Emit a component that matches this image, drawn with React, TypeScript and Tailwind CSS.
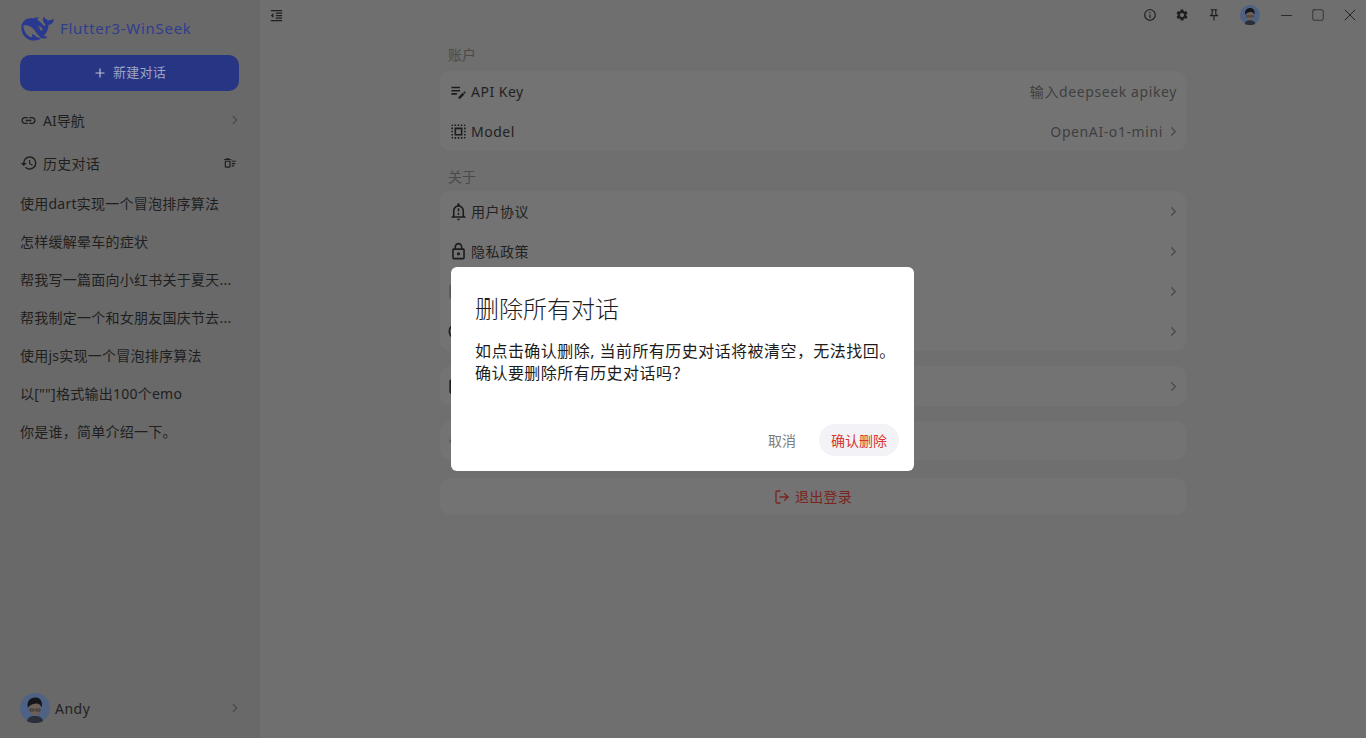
import { ChevronRight, LogOut, Minus, Plus, Square, X } from 'lucide-react';
import {
  MdCheckBoxOutlineBlank,
  MdCircle,
  MdFormatIndentDecrease,
  MdHistory,
  MdInfoOutline,
  MdLink,
  MdOutlineDeleteSweep,
  MdOutlineEditNote,
  MdOutlineLock,
  MdOutlineNotificationImportant,
  MdOutlinePushPin,
  MdRadioButtonUnchecked,
  MdSelectAll,
  MdSettings,
} from 'react-icons/md';

const font = "font-['Noto_Sans','Noto_Sans_CJK_SC',sans-serif]";

const chats = [
  '使用dart实现一个冒泡排序算法',
  '怎样缓解晕车的症状',
  '帮我写一篇面向小红书关于夏天...',
  '帮我制定一个和女朋友国庆节去...',
  '使用js实现一个冒泡排序算法',
  '以[""]格式输出100个emo',
  '你是谁，简单介绍一下。',
];

function Logo() {
  return (
    <svg width="33" height="25" viewBox="0 2.5 24 18.5" fill="#2a3990" className="shrink-0">
      <path d="M23.748 4.482c-.254-.124-.364.113-.512.234-.051.039-.094.09-.137.136-.372.397-.806.657-1.373.626-.829-.046-1.537.214-2.163.848-.133-.782-.575-1.248-1.247-1.548-.352-.156-.708-.311-.955-.65-.172-.241-.219-.51-.305-.774-.055-.16-.11-.323-.293-.35-.2-.031-.278.136-.356.276-.313.572-.434 1.202-.422 1.84.027 1.436.633 2.58 1.838 3.393.137.093.172.187.129.323-.082.28-.18.552-.266.833-.055.179-.137.217-.329.14a5.526 5.526 0 01-1.736-1.18c-.857-.828-1.631-1.742-2.597-2.458a11.365 11.365 0 00-.689-.471c-.985-.957.13-1.743.388-1.836.27-.098.093-.432-.779-.428-.872.004-1.67.295-2.687.684a3.055 3.055 0 01-.465.137 9.597 9.597 0 00-2.883-.102c-1.885.21-3.39 1.102-4.497 2.623C.082 8.606-.231 10.684.152 12.85c.403 2.284 1.569 4.175 3.36 5.653 1.858 1.533 3.997 2.284 6.438 2.14 1.482-.085 3.133-.284 4.994-1.86.47.234.962.327 1.78.397.63.059 1.236-.03 1.705-.128.735-.156.684-.837.419-.961-2.155-1.004-1.682-.595-2.113-.926 1.096-1.296 2.746-2.642 3.392-7.003.05-.347.007-.565 0-.845-.004-.17.035-.237.23-.256a4.173 4.173 0 001.545-.475c1.396-.763 1.96-2.015 2.093-3.517.02-.23-.004-.467-.247-.588zM11.581 18c-2.089-1.642-3.102-2.183-3.52-2.16-.392.024-.321.471-.235.763.09.288.207.486.371.739.114.167.192.416-.113.603-.673.416-1.842-.14-1.897-.167-1.361-.802-2.5-1.86-3.301-3.307-.774-1.393-1.224-2.887-1.298-4.482-.02-.386.093-.522.477-.592a4.696 4.696 0 011.529-.039c2.132.312 3.946 1.265 5.468 2.774.868.86 1.525 1.887 2.202 2.891.72 1.066 1.494 2.082 2.48 2.914.348.292.625.514.891.677-.802.09-2.14.11-3.054-.614zm1-6.44a.306.306 0 01.415-.287.302.302 0 01.2.288.306.306 0 01-.31.307.303.303 0 01-.304-.308zm3.11 1.596c-.2.081-.399.151-.59.16a1.245 1.245 0 01-.798-.254c-.274-.23-.47-.358-.552-.758a1.73 1.73 0 01.016-.588c.07-.327-.008-.537-.239-.727-.187-.156-.426-.199-.688-.199a.559.559 0 01-.254-.078c-.11-.054-.2-.19-.114-.358.028-.054.16-.186.192-.21.356-.202.767-.136 1.146.016.352.144.618.408 1.001.782.391.451.462.576.685.914.176.265.336.537.445.848.067.195-.019.354-.25.452z" />
    </svg>
  );
}

function Avatar({ size }: { size: number }) {
  return (
    <svg width={size} height={size} viewBox="0 0 30 30" className="shrink-0">
      <circle cx="15" cy="15" r="15" fill="#4f6283" />
      <path d="M7 28c1-4 4-5 8-5s7 1 8 5c-2 1.500-5 2-8 2s-6-.5-8-2z" fill="#2a2f3a" />
      <ellipse cx="15" cy="16" rx="5.500" ry="6.500" fill="#6e5f55" />
      <path d="M8 15c-2-7 3-11 8-10.500 5 .5 7 5 5.500 10-1-3-3-4.500-6-4-2.500.5-6 1-7.500 4.500z" fill="#14161c" />
      <path d="M10 16h4v2h-4zM16 16h4v2h-4z" fill="none" stroke="#2a2a2a" strokeWidth="0.7" />
    </svg>
  );
}

function SettingRow({
  icon,
  label,
  value,
  chevron = true,
}: {
  icon: React.ReactNode;
  label?: string;
  value?: string;
  chevron?: boolean;
}) {
  return (
    <div className="flex h-10 items-center pr-[9px] pl-[9px]">
      <span className="flex w-[22px] text-[#1c1c1c]">{icon}</span>
      {label && <span className="text-[14px] tracking-[0.5px] text-[#222222]">{label}</span>}
      {value && <span className="ml-auto text-[14px] tracking-[0.6px] text-[#3f3f3f]">{value}</span>}
      {chevron && (
        <ChevronRight size={15} strokeWidth={2} className={`${value ? 'ml-[3px]' : 'ml-auto'} -mr-[4px] text-[#4a4a4a]`} />
      )}
    </div>
  );
}

function IconSlot({ children }: { children: React.ReactNode }) {
  return <span className="flex w-8 justify-center">{children}</span>;
}

export default function App() {
  return (
    <div className={`${font} relative flex h-[738px] w-[1366px] overflow-hidden bg-[#6f6f6f]`}>
      <aside className="flex w-[260px] shrink-0 flex-col bg-[#696969] px-5">
        <div className="mt-[15px] flex h-[26px] items-center gap-[6px] pl-[1px]">
          <Logo />
          <span className="text-[15px] tracking-[0.72px] text-[#2f3d8f]">Flutter3-WinSeek</span>
        </div>
        <button className="mt-[14px] flex h-9 w-[219px] items-center justify-center gap-[6px] rounded-[10px] bg-[#273585] text-[13px] tracking-[0.25px] text-[#a0a4c0]">
          <Plus size={14} strokeWidth={2} className="text-[#bcbfd2]" />
          新建对话
        </button>
        <div className="mt-[11px] flex h-[36px] items-center text-[#1f1f1f]">
          <MdLink size={17} className="mr-[6px]" />
          <span className="text-[14px]">AI导航</span>
          <ChevronRight size={14} strokeWidth={2} className="-mr-[2px] ml-auto text-[#4a4a4a]" />
        </div>
        <div className="mt-[7px] flex h-[36px] items-center text-[#1f1f1f]">
          <MdHistory size={18} className="mr-[5px]" />
          <span className="text-[14px] tracking-[0.25px]">历史对话</span>
          <MdOutlineDeleteSweep size={14} className="mr-[3px] ml-auto" />
        </div>
        <ul className="mt-[3px] flex flex-col">
          {chats.map((chat) => (
            <li key={chat} className="flex h-[38px] items-center text-[14px] tracking-[0.25px] text-[#1f1f1f]">
              {chat}
            </li>
          ))}
        </ul>
        <div className="mt-auto mb-[15px] flex h-[30px] items-center gap-[5px]">
          <Avatar size={30} />
          <span className="text-[14px] tracking-[0.5px] text-[#222222]">Andy</span>
          <ChevronRight size={14} strokeWidth={2} className="-mr-[2px] ml-auto text-[#4a4a4a]" />
        </div>
      </aside>

      <main className="flex min-w-0 flex-1 flex-col">
        <header className="flex h-[30px] items-center pl-[9px] text-[#1f1f1f]">
          <MdFormatIndentDecrease size={15} />
          <div className="ml-auto flex items-center">
            <IconSlot><MdInfoOutline size={14} /></IconSlot>
            <IconSlot><MdSettings size={14} /></IconSlot>
            <IconSlot><MdOutlinePushPin size={14} /></IconSlot>
            <span className="flex w-10 justify-center"><Avatar size={20} /></span>
            <IconSlot><Minus size={17} strokeWidth={1.2} /></IconSlot>
            <IconSlot><Square size={14} strokeWidth={1.2} /></IconSlot>
            <IconSlot><X size={20} strokeWidth={1.1} /></IconSlot>
          </div>
        </header>

        <div className="ml-[180px] flex w-[746px] flex-col">
          <h3 className="mt-[15px] pl-2 text-[14px] leading-[20px] text-[#4a4a4a]">账户</h3>
          <section className="mt-[6px] rounded-[10px] bg-[#737373]">
            <SettingRow icon={<MdOutlineEditNote size={19} />} label="API Key" value="输入deepseek apikey" chevron={false} />
            <SettingRow icon={<MdSelectAll size={19} />} label="Model" value="OpenAI-o1-mini" />
          </section>
          <h3 className="mt-[16px] pl-2 text-[14px] leading-[20px] text-[#4a4a4a]">关于</h3>
          <section className="mt-[4px] rounded-[10px] bg-[#737373]">
            <SettingRow icon={<MdOutlineNotificationImportant size={19} />} label="用户协议" />
            <SettingRow icon={<MdOutlineLock size={19} />} label="隐私政策" />
            <SettingRow icon={<MdCheckBoxOutlineBlank size={19} className="-ml-[2px] text-[#555555]" />} />
            <SettingRow icon={<MdRadioButtonUnchecked size={19} className="-ml-[2px]" />} />
          </section>
          <section className="mt-[15px] rounded-[10px] bg-[#737373]">
            <SettingRow icon={<MdCheckBoxOutlineBlank size={19} className="-ml-[2px]" />} />
          </section>
          <section className="mt-[15px] flex h-[39px] items-center rounded-[10px] bg-[#737373] pl-[9px]">
            <MdCircle size={4} className="text-[#555555]" />
          </section>
          <button className="mt-[18px] flex h-[37px] items-center justify-center gap-[5px] rounded-[10px] bg-[#737373] text-[14px] tracking-[0.25px] text-[#7a2420]">
            <LogOut size={16} strokeWidth={2} />
            退出登录
          </button>
        </div>
      </main>

      {/* dialog sits over the dimmed page */}
      <div className="absolute inset-0 flex items-center justify-center pr-[1px]">
        <div className="flex h-[204px] w-[463px] flex-col rounded-[6px] bg-white pt-[24px] pr-[15px] pb-[15px] pl-[24px]">
          <h2 className="text-[24px] leading-[36px] font-light text-[#1c1c1c]">删除所有对话</h2>
          <p className="mt-[13px] text-[16px] leading-[22px] tracking-[0.45px] text-[#1c1c1c]">
            如点击确认删除, 当前所有历史对话将被清空，无法找回。
            <br />
            确认要删除所有历史对话吗？
          </p>
          <div className="mt-auto flex items-center justify-end gap-[23px]">
            <button className="ml-[1px] text-[14px] text-[#7d7d7d]">取消</button>
            <button className="h-8 rounded-full bg-[#f3f2f6] px-3 text-[14px] text-[#d8372b]">确认删除</button>
          </div>
        </div>
      </div>
    </div>
  );
}
